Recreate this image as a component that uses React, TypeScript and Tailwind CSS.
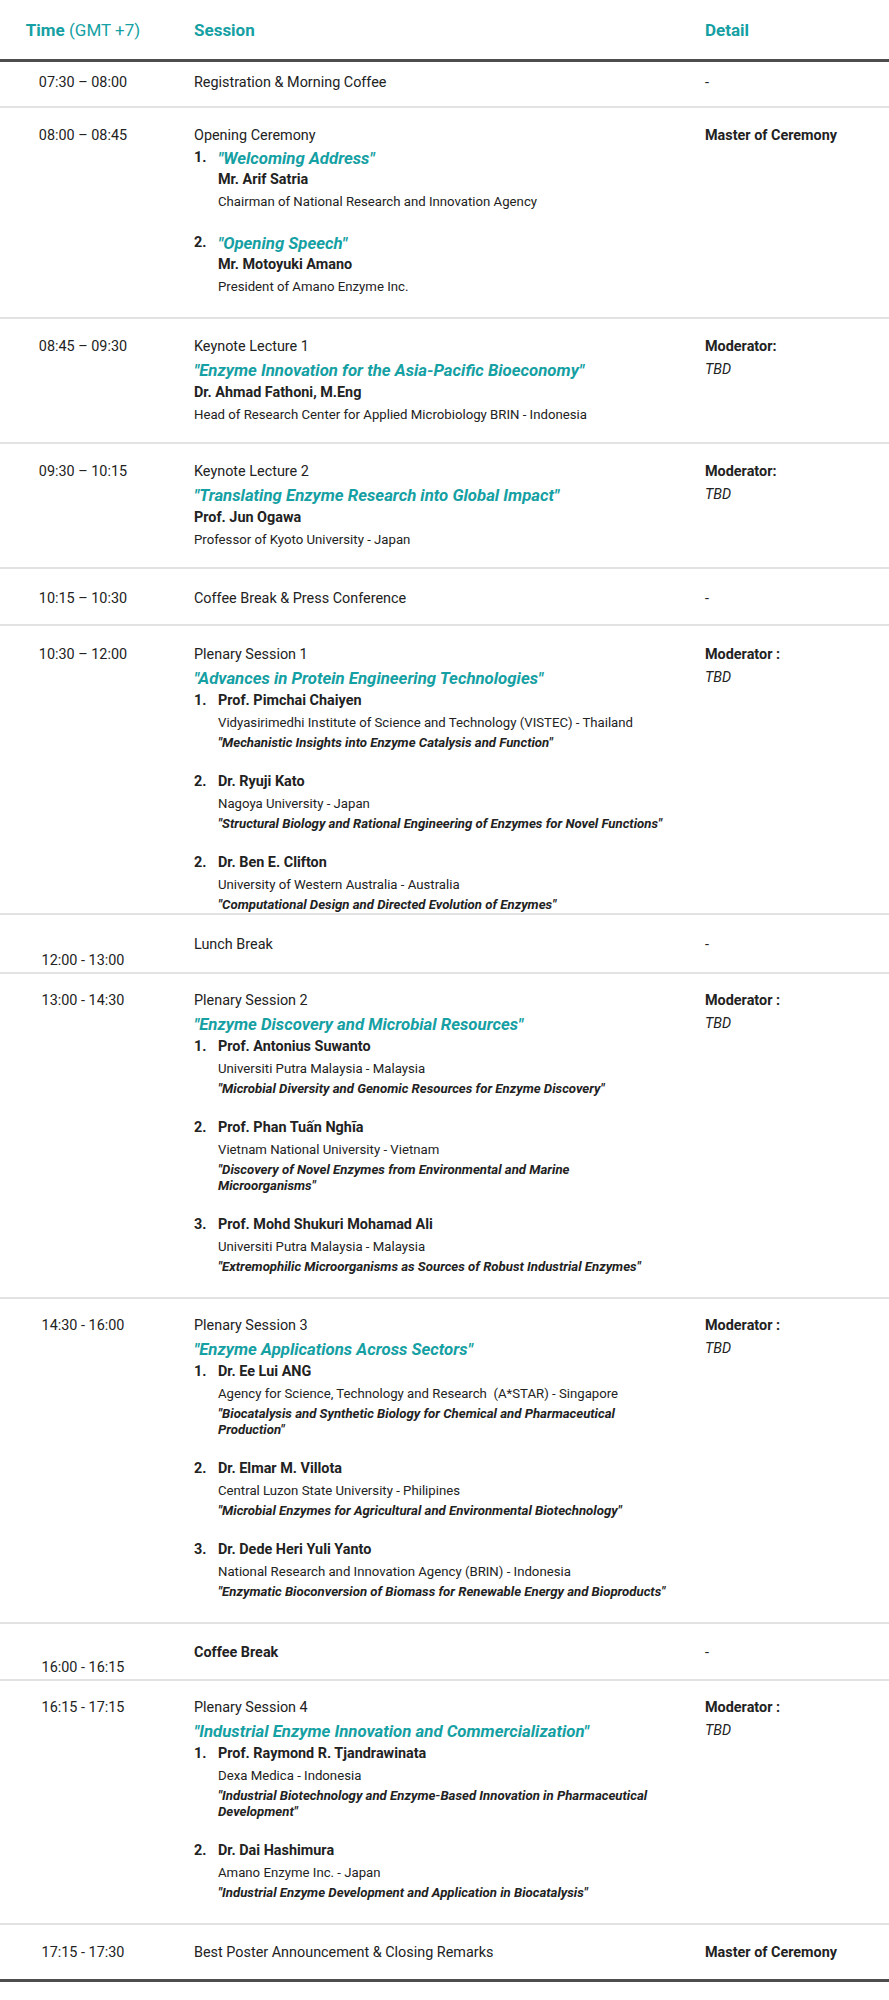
import React from "react";
import clsx from "clsx";

type Speaker = {
  num: string;
  name: string;
  org: string;
  talk: React.ReactNode;
};

function Row({
  time,
  detail,
  className,
  timeEnd,
  last,
  children,
}: {
  time: React.ReactNode;
  detail?: React.ReactNode;
  className?: string;
  timeEnd?: boolean;
  last?: boolean;
  children: React.ReactNode;
}) {
  return (
    <div
      className={clsx(
        "flex",
        last ? "border-b-[3px] border-[#4d4d4d]" : "border-b-2 border-[#e2e2e2]",
        className
      )}
    >
      <div className={clsx("w-[166px] shrink-0 text-center leading-[22px]", timeEnd && "self-end")}>
        {time}
      </div>
      <div className="w-[539px] shrink-0 pl-[28px] pr-[12px]">{children}</div>
      <div className="flex-1 leading-[22px]">{detail}</div>
    </div>
  );
}

function Moderator({ space = true }: { space?: boolean }) {
  return (
    <>
      <div className="font-bold leading-[22px]">{space ? "Moderator :" : "Moderator:"}</div>
      <div className="italic leading-[24px]">TBD</div>
    </>
  );
}

function Title({ children }: { children: React.ReactNode }) {
  return (
    <div className="text-[16.8px] font-bold italic leading-[24px] text-[#15a0a3]">{children}</div>
  );
}

function Speakers({ items }: { items: Speaker[] }) {
  return (
    <div className="flex flex-col gap-[20px]">
      {items.map((s) => (
        <div key={s.name} className="flex">
          <div className="w-[24px] shrink-0 font-bold leading-[22px]">{s.num}</div>
          <div>
            <div className="font-bold leading-[22px]">{s.name}</div>
            <div className="text-[13.2px] leading-[21px]">{s.org}</div>
            <div className="mt-[2px] text-[13.2px] font-bold italic leading-[16px]">{s.talk}</div>
          </div>
        </div>
      ))}
    </div>
  );
}

export default function App() {
  return (
    <div className="w-[889px] bg-white text-[14.4px] text-[#222] font-['Roboto',sans-serif]">
      {/* header */}
      <div className="flex border-b-[3px] border-[#4d4d4d] pt-[18px] pb-[17px] text-[17px] leading-[24px] text-[#15a0a3]">
        <div className="w-[166px] shrink-0 text-center">
          <span className="font-bold">Time</span> (GMT +7)
        </div>
        <div className="w-[539px] shrink-0 pl-[28px] font-bold">Session</div>
        <div className="flex-1 font-bold">Detail</div>
      </div>

      <Row time="07:30 – 08:00" detail="-" className="pt-[10px] pb-[12px]">
        Registration &amp; Morning Coffee
      </Row>

      <Row
        time="08:00 – 08:45"
        detail={<span className="font-bold">Master of Ceremony</span>}
        className="pt-[17px] pb-[20px]"
      >
        <div className="leading-[22px]">Opening Ceremony</div>
        <div className="flex flex-col gap-[20px]">
          <div className="flex">
            <div className="w-[24px] shrink-0 font-bold leading-[22px]">1.</div>
            <div>
              <div className="text-[16.8px] font-bold italic leading-[22px] text-[#15a0a3]">"Welcoming Address"</div>
              <div className="font-bold leading-[22px]">Mr. Arif Satria</div>
              <div className="text-[13.2px] leading-[21px]">Chairman of National Research and Innovation Agency</div>
            </div>
          </div>
          <div className="flex">
            <div className="w-[24px] shrink-0 font-bold leading-[22px]">2.</div>
            <div>
              <div className="text-[16.8px] font-bold italic leading-[22px] text-[#15a0a3]">"Opening Speech"</div>
              <div className="font-bold leading-[22px]">Mr. Motoyuki Amano</div>
              <div className="text-[13.2px] leading-[21px]">President of Amano Enzyme Inc.</div>
            </div>
          </div>
        </div>
      </Row>

      <Row time="08:45 – 09:30" detail={<Moderator space={false} />} className="pt-[17px] pb-[17px]">
        <div className="leading-[22px]">Keynote Lecture 1</div>
        <Title>"Enzyme Innovation for the Asia-Pacific Bioeconomy"</Title>
        <div className="font-bold leading-[22px]">Dr. Ahmad Fathoni, M.Eng</div>
        <div className="text-[13.2px] leading-[21px]">Head of Research Center for Applied Microbiology BRIN - Indonesia</div>
      </Row>

      <Row time="09:30 – 10:15" detail={<Moderator space={false} />} className="pt-[17px] pb-[17px]">
        <div className="leading-[22px]">Keynote Lecture 2</div>
        <Title>"Translating Enzyme Research into Global Impact"</Title>
        <div className="font-bold leading-[22px]">Prof. Jun Ogawa</div>
        <div className="text-[13.2px] leading-[21px]">Professor of Kyoto University - Japan</div>
      </Row>

      <Row time="10:15 – 10:30" detail="-" className="pt-[19px] pb-[14px]">
        Coffee Break &amp; Press Conference
      </Row>

      <Row time="10:30 – 12:00" detail={<Moderator />} className="pt-[18px]">
        <div className="leading-[22px]">Plenary Session 1</div>
        <Title>"Advances in Protein Engineering Technologies"</Title>
        <Speakers
          items={[
            {
              num: "1.",
              name: "Prof. Pimchai Chaiyen",
              org: "Vidyasirimedhi Institute of Science and Technology (VISTEC) - Thailand",
              talk: "\"Mechanistic Insights into Enzyme Catalysis and Function\"",
            },
            {
              num: "2.",
              name: "Dr. Ryuji Kato",
              org: "Nagoya University - Japan",
              talk: "\"Structural Biology and Rational Engineering of Enzymes for Novel Functions\"",
            },
            {
              num: "2.",
              name: "Dr. Ben E. Clifton",
              org: "University of Western Australia - Australia",
              talk: "\"Computational Design and Directed Evolution of Enzymes\"",
            },
          ]}
        />
      </Row>

      <Row time="12:00 - 13:00" detail="-" timeEnd className="h-[59px] pt-[19px]">
        <div className="leading-[22px]">Lunch Break</div>
      </Row>

      <Row time="13:00 - 14:30" detail={<Moderator />} className="pt-[16px] pb-[22px]">
        <div className="leading-[22px]">Plenary Session 2</div>
        <Title>"Enzyme Discovery and Microbial Resources"</Title>
        <Speakers
          items={[
            {
              num: "1.",
              name: "Prof. Antonius Suwanto",
              org: "Universiti Putra Malaysia - Malaysia",
              talk: "\"Microbial Diversity and Genomic Resources for Enzyme Discovery\"",
            },
            {
              num: "2.",
              name: "Prof. Phan Tuấn Nghĩa",
              org: "Vietnam National University - Vietnam",
              talk: (
                <>
                  "Discovery of Novel Enzymes from Environmental and Marine
                  <br />
                  Microorganisms"
                </>
              ),
            },
            {
              num: "3.",
              name: "Prof. Mohd Shukuri Mohamad Ali",
              org: "Universiti Putra Malaysia - Malaysia",
              talk: "\"Extremophilic Microorganisms as Sources of Robust Industrial Enzymes\"",
            },
          ]}
        />
      </Row>

      <Row time="14:30 - 16:00" detail={<Moderator />} className="pt-[16px] pb-[22px]">
        <div className="leading-[22px]">Plenary Session 3</div>
        <Title>"Enzyme Applications Across Sectors"</Title>
        <Speakers
          items={[
            {
              num: "1.",
              name: "Dr. Ee Lui ANG",
              org: "Agency for Science, Technology and Research\u00a0 (A*STAR) - Singapore",
              talk: (
                <>
                  "Biocatalysis and Synthetic Biology for Chemical and Pharmaceutical
                  <br />
                  Production"
                </>
              ),
            },
            {
              num: "2.",
              name: "Dr. Elmar M. Villota",
              org: "Central Luzon State University - Philipines",
              talk: "\"Microbial Enzymes for Agricultural and Environmental Biotechnology\"",
            },
            {
              num: "3.",
              name: "Dr. Dede Heri Yuli Yanto",
              org: "National Research and Innovation Agency (BRIN) - Indonesia",
              talk: "\"Enzymatic Bioconversion of Biomass for Renewable Energy and Bioproducts\"",
            },
          ]}
        />
      </Row>

      <Row time="16:00 - 16:15" detail="-" timeEnd className="h-[57px] pt-[18px]">
        <div className="font-bold leading-[22px]">Coffee Break</div>
      </Row>

      <Row time="16:15 - 17:15" detail={<Moderator />} className="pt-[16px] pb-[22px]">
        <div className="leading-[22px]">Plenary Session 4</div>
        <Title>"Industrial Enzyme Innovation and Commercialization"</Title>
        <Speakers
          items={[
            {
              num: "1.",
              name: "Prof. Raymond R. Tjandrawinata",
              org: "Dexa Medica - Indonesia",
              talk: (
                <>
                  "Industrial Biotechnology and Enzyme-Based Innovation in Pharmaceutical
                  <br />
                  Development"
                </>
              ),
            },
            {
              num: "2.",
              name: "Dr. Dai Hashimura",
              org: "Amano Enzyme Inc. - Japan",
              talk: "\"Industrial Enzyme Development and Application in Biocatalysis\"",
            },
          ]}
        />
      </Row>

      <Row
        time="17:15 - 17:30"
        detail={<span className="font-bold">Master of Ceremony</span>}
        className="pt-[17px] pb-[15px]"
        last
      >
        <div className="leading-[22px]">Best Poster Announcement &amp; Closing Remarks</div>
      </Row>
    </div>
  );
}
